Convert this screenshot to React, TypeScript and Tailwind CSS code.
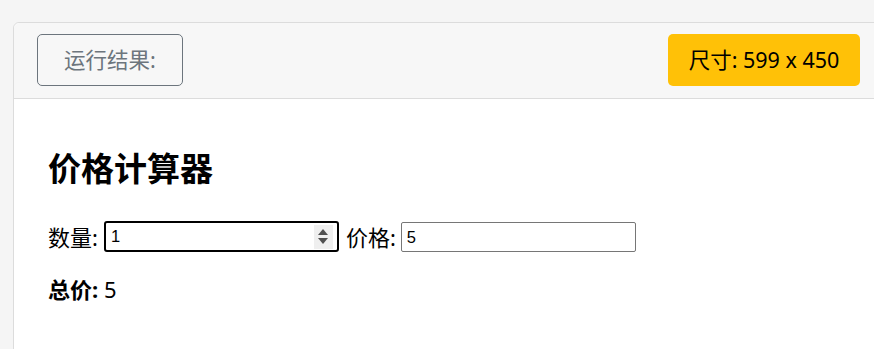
import React from "react";

export default function App() {
  const font = { fontFamily: '"Noto Sans", "Noto Sans CJK SC", sans-serif' };
  return (
    <div className="h-[349px] w-[874px] overflow-hidden bg-[#f5f5f5] pt-[22px] pl-[13px]" style={font}>
      <div className="w-[871px] rounded-tl-[6px] border border-[#dcdcdc] bg-white">
        <div className="flex items-center justify-between rounded-tl-[6px] border-b border-[#dcdcdc] bg-[#f7f7f7] pt-[11px] pb-[12px] pl-[23px] pr-[23px]">
          <div className="flex h-[52px] w-[146px] items-center justify-center rounded-[5px] border border-[#6c757d] text-[21.5px] text-[#6c757d]">
            运行结果:
          </div>
          <div className="flex h-[52px] w-[192px] items-center justify-center rounded-[5px] bg-[#ffc107] text-[21.5px] text-black">
            尺寸: 599 x 450
          </div>
        </div>
        <div className="pl-[34px] pt-[50px] pb-[80px] text-black">
          <h1 className="text-[33px] font-bold leading-[40px]">价格计算器</h1>
          <div className="mt-[32px] flex items-center text-[22px] leading-[30px]">
            <span>数量:</span>
            <div className="ml-[6px] flex h-[31px] w-[235px] items-center rounded-[3px] border-2 border-black bg-white">
              <input
                className="h-full min-w-0 flex-1 bg-transparent pl-[5px] text-[16.5px] outline-none"
                style={{ fontFamily: '"Liberation Sans", Arial, sans-serif' }}
                defaultValue="1"
              />
              <div className="mr-[4px] flex h-[24px] w-[19px] flex-col items-center justify-center gap-[3px] bg-[#efefef]">
                <svg width="10" height="6" viewBox="0 0 10 6"><path d="M0 6 L5 0 L10 6 Z" fill="#505050" /></svg>
                <svg width="10" height="6" viewBox="0 0 10 6"><path d="M0 0 L10 0 L5 6 Z" fill="#505050" /></svg>
              </div>
            </div>
            <span className="ml-[7px]">价格:</span>
            <input
              className="ml-[5px] h-[30px] w-[235px] rounded-[2px] border border-[#767676] bg-white pl-[5px] text-[16.5px] outline-none"
              style={{ fontFamily: '"Liberation Sans", Arial, sans-serif' }}
              defaultValue="5"
            />
          </div>
          <p className="mt-[22px] text-[22px] leading-[30px]">
            <b>总价:</b> 5
          </p>
        </div>
      </div>
    </div>
  );
}
